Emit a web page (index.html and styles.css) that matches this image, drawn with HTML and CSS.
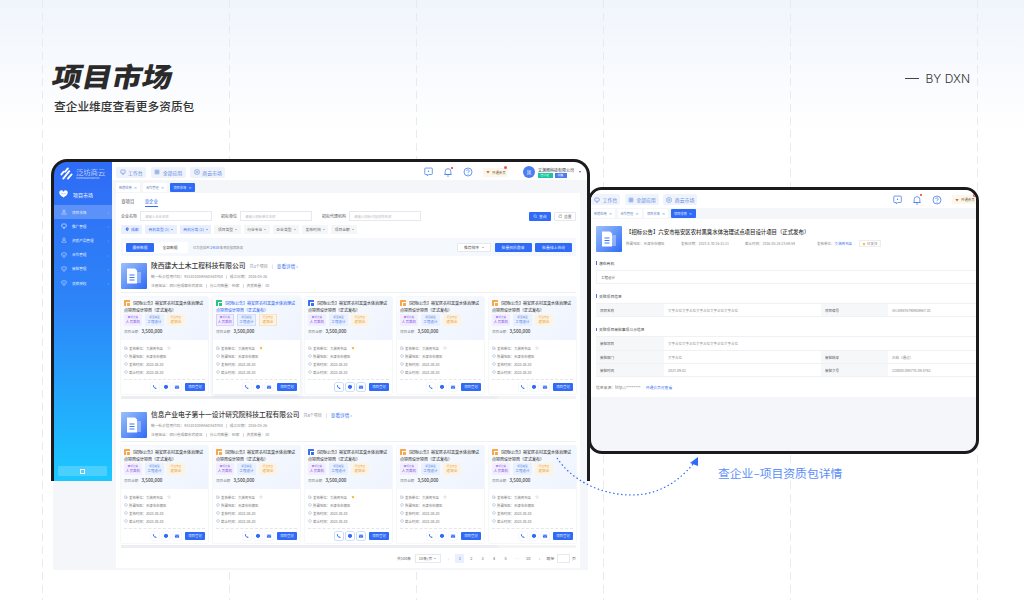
FILE: index.html
```html
<!DOCTYPE html>
<html lang="zh-CN">
<head>
<meta charset="utf-8">
<title>项目市场</title>
<link rel="stylesheet" href="styles.css">
</head>
<body>
<svg class="sprite" width="0" height="0" aria-hidden="true">
  <symbol id="i-monitor" viewBox="0 0 12 12"><rect x="1.5" y="2" width="9" height="6.5" rx="2" fill="none" stroke="currentColor" stroke-width="1.2"/><path d="M4 10.5h4" stroke="currentColor" stroke-width="1.2"/></symbol>
  <symbol id="i-apps" viewBox="0 0 12 12"><path d="M2 2h3.5v3.5H2zM6.500 2H10v3.5H6.500zM2 6.500h3.500V10H2zM6.500 6.500H10V10H6.500z" fill="none" stroke="currentColor" stroke-width="1"/></symbol>
  <symbol id="i-market" viewBox="0 0 12 12"><rect x="1.5" y="1.5" width="9" height="9" rx="2.5" fill="none" stroke="currentColor" stroke-width="1.1"/><circle cx="6" cy="6" r="1.6" fill="none" stroke="currentColor" stroke-width="1"/></symbol>
  <symbol id="i-chat" viewBox="0 0 14 14"><path d="M2.500 2.500a1 1 0 0 1 1-1H12a1 1 0 0 1 1 1v7a1 1 0 0 1-1 1H8l-2 2v-2H3.500a1 1 0 0 1-1-1z" fill="none" stroke="currentColor" stroke-width="1.1" stroke-linejoin="round"/><circle cx="7.700" cy="6" r="1" fill="currentColor"/></symbol>
  <symbol id="i-bell" viewBox="0 0 14 14"><path d="M3 10.500V6.300a4 4 0 0 1 8 0v4.200zM1.800 10.500h10.400M5.600 12.600h2.800" fill="none" stroke="currentColor" stroke-width="1.1" stroke-linejoin="round"/></symbol>
  <symbol id="i-help" viewBox="0 0 14 14"><circle cx="7" cy="7" r="5.600" fill="none" stroke="currentColor" stroke-width="1.1"/><path d="M5.300 5.600a1.700 1.700 0 1 1 2.600 1.400c-.6.400-.9.700-.9 1.400" fill="none" stroke="currentColor" stroke-width="1.1"/><circle cx="7" cy="10.200" r=".7" fill="currentColor"/></symbol>
  <symbol id="i-vip" viewBox="0 0 10 10"><path d="M1 2.500h8L5 8.500z" fill="#a96a1c"/><path d="M3.500 3.500L5 5.500l1.500-2" fill="none" stroke="#ffe3a8" stroke-width=".8"/></symbol>
  <symbol id="i-user" viewBox="0 0 12 12"><circle cx="6" cy="3.800" r="2.200" fill="none" stroke="currentColor" stroke-width=".9"/><path d="M1.600 10.500c.4-2.600 2.200-3.800 4.400-3.800s4 1.200 4.400 3.800z" fill="none" stroke="currentColor" stroke-width=".9"/></symbol>
  <symbol id="i-shield" viewBox="0 0 12 12"><path d="M6 1.200l4.600 1.600c.2 3.800-1.200 6.400-4.600 8-3.400-1.600-4.800-4.200-4.600-8z" fill="none" stroke="currentColor" stroke-width="1"/><path d="M3.800 5.400L6 7.400l2.200-2" fill="none" stroke="currentColor" stroke-width=".9"/></symbol>
  <symbol id="i-heart" viewBox="0 0 14 12"><path d="M7 11.500C3 8.600.5 6.600.5 3.900A3.300 3.300 0 0 1 7 2.800a3.300 3.300 0 0 1 6.500 1.100c0 2.700-2.500 4.700-6.500 7.600z" fill="currentColor"/><path d="M3.500 5h2.300l1.200 1.300L8.200 5h2.300" fill="none" stroke="#5b8ff8" stroke-width=".7"/></symbol>
  <symbol id="i-doc" viewBox="0 0 26 26"><rect x="15.500" y="9" width="4.500" height="11" fill="#fff" opacity=".35"/><path d="M6 5.500h8l2 2v13H6z" fill="#fff"/><path d="M8.500 12h5M8.500 14.500h5M8.500 17h5" stroke="#3a78f5" stroke-width="1"/></symbol>
  <symbol id="i-phone" viewBox="0 0 8 8"><path d="M2 1.200l1 1.300-.5.700c.3.800.9 1.400 1.700 1.800l.8-.5 1.200 1.100-.9 1C3.200 6.300 1.500 4.400 1.100 2z" fill="currentColor"/></symbol>
  <symbol id="i-bubble" viewBox="0 0 8 8"><path d="M1.300 2.300L4 1l2.700 1.300v2.600L4 7 1.300 4.900z" fill="currentColor"/></symbol>
  <symbol id="i-mail" viewBox="0 0 8 8"><path d="M1.200 2.200h5.600v4H1.200z" fill="currentColor"/><path d="M1.400 3l2.600 1.500L6.600 3" fill="none" stroke="#fff" stroke-width=".5"/></symbol>
  <symbol id="i-home" viewBox="0 0 6 6"><path d="M1 5.200V1.300h2.400v3.900zM3.400 3H5v2.200" fill="none" stroke="currentColor" stroke-width=".6"/></symbol>
  <symbol id="i-ring" viewBox="0 0 6 6"><circle cx="3" cy="3" r="2.100" fill="none" stroke="currentColor" stroke-width=".6"/></symbol>
  <symbol id="i-star" viewBox="0 0 6 6"><path d="M3 .7l.7 1.500 1.600.2-1.200 1.100.3 1.600L3 4.300l-1.400.8.3-1.600L.7 2.400l1.600-.2z"/></symbol>
  <symbol id="i-search" viewBox="0 0 6 6"><circle cx="2.700" cy="2.700" r="1.800" fill="none" stroke="currentColor" stroke-width=".6"/><path d="M4 4l1.300 1.300" stroke="currentColor" stroke-width=".6"/></symbol>
  <symbol id="i-reset" viewBox="0 0 6 6"><path d="M5 3a2 2 0 1 1-.7-1.500M4.600.8v1.200H3.400" fill="none" stroke="currentColor" stroke-width=".5"/></symbol>
  <symbol id="i-pin" viewBox="0 0 6 6"><path d="M3 .6a2 2 0 0 1 2 2C5 4 3 5.500 3 5.500S1 4 1 2.600a2 2 0 0 1 2-2z" fill="currentColor"/><circle cx="3" cy="2.600" r=".7" fill="#e9effc"/></symbol>
</svg>

<main class="canvas">
  <div class="guides"><i></i><i></i><i></i><i></i><i></i><i></i></div>

  <header class="hero">
    <div class="hero-copy">
      <h1 class="hero-title">项目市场</h1>
      <p class="hero-sub">查企业维度查看更多资质包</p>
    </div>
    <div class="hero-by"><span class="hero-dash"></span>BY DXN</div>
  </header>

  <section class="win-a">
    <aside class="side">
      <div class="brand">
        <svg class="brand-mark" viewBox="0 0 14 13"><path d="M1.500 7.500L4 4.500M5.500 4.500L8.500 1M3.500 12L10 4M8.500 12L12.500 7.500" fill="none" stroke="#fff" stroke-width="2" stroke-linecap="round"/></svg>
        <div class="brand-text"><b>泛坊商云</b><small>FANFANGSHANGYUN</small></div>
      </div>
      <div class="side-head"><svg class="side-heart"><use href="#i-heart"/></svg>项目市场</div>
      <nav class="side-menu">
        <a class="side-item is-on"><svg><use href="#i-user"/></svg>项目市场<em>›</em></a>
        <a class="side-item"><svg><use href="#i-monitor"/></svg>推广管理<em>›</em></a>
        <a class="side-item"><svg><use href="#i-user"/></svg>资质产品管理<em>›</em></a>
        <a class="side-item"><svg><use href="#i-shield"/></svg>合作管理<em>›</em></a>
        <a class="side-item"><svg><use href="#i-shield"/></svg>审批管理<em>›</em></a>
        <a class="side-item"><svg><use href="#i-shield"/></svg>关联授权<em>›</em></a>
      </nav>
      <div class="side-fold"><span></span></div>
    </aside>

    <div class="main">
      <div class="topnav">
        <a class="pill"><svg><use href="#i-monitor"/></svg>工作台</a>
        <a class="pill"><svg><use href="#i-apps"/></svg>全部应用</a>
        <a class="pill"><svg><use href="#i-market"/></svg>商云市场</a>
        <div class="nav-right">
          <svg class="nav-ic"><use href="#i-chat"/></svg>
          <span class="nav-bell"><svg class="nav-ic"><use href="#i-bell"/></svg></span>
          <svg class="nav-ic"><use href="#i-help"/></svg>
          <span class="vip"><svg><use href="#i-vip"/></svg>开通会员</span>
          <span class="avatar">凤</span>
          <div class="account">
            <b>文渊阁科技有限公司</b>
            <div class="account-tags"><span class="tag-green">已认证</span><span class="tag-blue">创建人</span></div>
          </div>
          <span class="account-caret"></span>
        </div>
      </div>
      <div class="tabs">
        <a class="tab">新增应用<i>×</i></a>
        <a class="tab">合作管理<i>×</i></a>
        <a class="tab is-on">项目市场<i>×</i></a>
      </div>

      <div class="panel">
        <div class="seg">
          <a>查项目</a><a class="is-on">查企业</a>
        </div>
        <div class="search">
          <label>企业名称</label><span class="field">请输入企业名称</span>
          <label>招标单位</label><span class="field">请输入招标单位名称</span>
          <label>招标代理机构</label><span class="field">请输入招标代理机构名称</span>
          <a class="btn btn-primary btn-query"><svg><use href="#i-search"/></svg>查询</a><a class="btn btn-plain"><svg><use href="#i-reset"/></svg>重置</a>
        </div>
        <div class="filters">
          <a class="chip chip-on chip-city"><svg><use href="#i-pin"/></svg>成都</a>
          <a class="chip chip-on">商机类型 (1) <i></i></a>
          <a class="chip chip-on">商机分类 (2) <i></i></a>
          <a class="chip">项目类型 <i></i></a>
          <a class="chip">行业专业 <i></i></a>
          <a class="chip">企业类型 <i></i></a>
          <a class="chip">发布时间 <i></i></a>
          <a class="chip">项目金额 <i></i></a>
        </div>
        <div class="toolbar">
          <div class="switch"><a class="is-on">最新数据</a><a>全部数据</a></div>
          <p class="found">已为您找到 <b>2938</b> 条相关搜索结果</p>
          <a class="btn btn-plain sort">推荐排序 <i></i></a>
          <a class="btn btn-primary batch">批量招投邀请</a>
          <a class="btn btn-primary batch">批量线上咨询</a>
        </div>

        <article class="company">
          <div class="co-head">
            <svg class="co-logo"><use href="#i-doc"/></svg>
            <div class="co-info">
              <h2>陕西建大土木工程科技有限公司<span>共<b>3</b>个项目</span><span class="co-sep">|</span><a>查看详情 ›</a></h2>
              <p><span>统一社会信用代码：91510105MA6DE63Y04</span><span>成立日期：2016-05-26</span></p>
              <p><span>注册地址：四川省成都市武侯区</span><span>分公司数量：95家</span><span>资质数量：10</span></p>
            </div>
          </div>
          <div class="cards">
            <div class="card">
              <div class="card-top"><h3><i class="mark mark-o"></i>【招标公告】裕安区农村黑臭水体治理试点项目设计项目（正式发布）</h3><div class="tags"><span class="t-p"><small>商机分类</small>人员裁机</span><span class="t-b"><small>项目类型</small>工程设计</span><span class="t-o"><small>行业专业</small>建筑业</span></div><p class="amount">项目金额<b>3,500,000</b></p></div>
              <ul class="rows"><li><svg><use href="#i-home"/></svg>发布单位：文渊阁书店<svg class="star"><use href="#i-star"/></svg></li><li><svg><use href="#i-ring"/></svg>所属地区：天津市市辖区</li><li><svg><use href="#i-ring"/></svg>发布时间：2023-08-30</li><li><svg><use href="#i-ring"/></svg>截止时间：2023-08-30</li></ul>
              <div class="acts"><a><svg><use href="#i-phone"/></svg></a><a><svg><use href="#i-bubble"/></svg></a><a><svg><use href="#i-mail"/></svg></a><b>项目登记</b></div>
            </div>
            <div class="card card-hover">
              <div class="card-top"><h3><i class="mark mark-g"></i>【招标公告】裕安区农村黑臭水体治理试点项目设计项目（正式发布）</h3><div class="tags"><span class="t-p"><small>商机分类</small>人员裁机</span><span class="t-b"><small>项目类型</small>工程设计</span><span class="t-o"><small>行业专业</small>建筑业</span></div><p class="amount">项目金额<b>3,500,000</b></p></div>
              <ul class="rows"><li><svg><use href="#i-home"/></svg>发布单位：文渊阁书店<svg class="star star-on"><use href="#i-star"/></svg></li><li><svg><use href="#i-ring"/></svg>所属地区：天津市市辖区</li><li><svg><use href="#i-ring"/></svg>发布时间：2023-08-30</li><li><svg><use href="#i-ring"/></svg>截止时间：2023-08-30</li></ul>
              <div class="acts"><a><svg><use href="#i-phone"/></svg></a><a><svg><use href="#i-bubble"/></svg></a><a><svg><use href="#i-mail"/></svg></a><b>项目登记</b></div>
            </div>
            <div class="card card-acts">
              <div class="card-top"><h3><i class="mark mark-b"></i>【招标公告】裕安区农村黑臭水体治理试点项目设计项目（正式发布）</h3><div class="tags"><span class="t-p"><small>商机分类</small>人员裁机</span><span class="t-b"><small>项目类型</small>工程设计</span><span class="t-o"><small>行业专业</small>建筑业</span></div><p class="amount">项目金额<b>3,500,000</b></p></div>
              <ul class="rows"><li><svg><use href="#i-home"/></svg>发布单位：文渊阁书店<svg class="star star-on"><use href="#i-star"/></svg></li><li><svg><use href="#i-ring"/></svg>所属地区：天津市市辖区</li><li><svg><use href="#i-ring"/></svg>发布时间：2023-08-30</li><li><svg><use href="#i-ring"/></svg>截止时间：2023-08-30</li></ul>
              <div class="acts"><a><svg><use href="#i-phone"/></svg></a><a><svg><use href="#i-bubble"/></svg></a><a><svg><use href="#i-mail"/></svg></a><b>项目登记</b></div>
            </div>
            <div class="card">
              <div class="card-top"><h3><i class="mark mark-o"></i>【招标公告】裕安区农村黑臭水体治理试点项目设计项目（正式发布）</h3><div class="tags"><span class="t-p"><small>商机分类</small>人员裁机</span><span class="t-b"><small>项目类型</small>工程设计</span><span class="t-o"><small>行业专业</small>建筑业</span></div><p class="amount">项目金额<b>3,500,000</b></p></div>
              <ul class="rows"><li><svg><use href="#i-home"/></svg>发布单位：文渊阁书店<svg class="star"><use href="#i-star"/></svg></li><li><svg><use href="#i-ring"/></svg>所属地区：天津市市辖区</li><li><svg><use href="#i-ring"/></svg>发布时间：2023-08-30</li><li><svg><use href="#i-ring"/></svg>截止时间：2023-08-30</li></ul>
              <div class="acts"><a><svg><use href="#i-phone"/></svg></a><a><svg><use href="#i-bubble"/></svg></a><a><svg><use href="#i-mail"/></svg></a><b>项目登记</b></div>
            </div>
            <div class="card">
              <div class="card-top"><h3><i class="mark mark-o"></i>【招标公告】裕安区农村黑臭水体治理试点项目设计项目（正式发布）</h3><div class="tags"><span class="t-p"><small>商机分类</small>人员裁机</span><span class="t-b"><small>项目类型</small>工程设计</span><span class="t-o"><small>行业专业</small>建筑业</span></div><p class="amount">项目金额<b>3,500,000</b></p></div>
              <ul class="rows"><li><svg><use href="#i-home"/></svg>发布单位：文渊阁书店<svg class="star"><use href="#i-star"/></svg></li><li><svg><use href="#i-ring"/></svg>所属地区：天津市市辖区</li><li><svg><use href="#i-ring"/></svg>发布时间：2023-08-30</li><li><svg><use href="#i-ring"/></svg>截止时间：2023-08-30</li></ul>
              <div class="acts"><a><svg><use href="#i-phone"/></svg></a><a><svg><use href="#i-bubble"/></svg></a><a><svg><use href="#i-mail"/></svg></a><b>项目登记</b></div>
            </div>
          </div>
          <div class="hscroll"><span></span></div>
        </article>

        <article class="company">
          <div class="co-head">
            <svg class="co-logo"><use href="#i-doc"/></svg>
            <div class="co-info">
              <h2>信息产业电子第十一设计研究院科技工程有限公司<span>共<b>8</b>个项目</span><span class="co-sep">|</span><a>查看详情 ›</a></h2>
              <p><span>统一社会信用代码：91510105MA6DE63Y04</span><span>成立日期：2016-05-26</span></p>
              <p><span>注册地址：四川省成都市武侯区</span><span>分公司数量：95家</span><span>资质数量：10</span></p>
            </div>
          </div>
          <div class="cards">
            <div class="card">
              <div class="card-top"><h3><i class="mark mark-o"></i>【招标公告】裕安区农村黑臭水体治理试点项目设计项目（正式发布）</h3><div class="tags"><span class="t-p"><small>商机分类</small>人员裁机</span><span class="t-b"><small>项目类型</small>工程设计</span><span class="t-o"><small>行业专业</small>建筑业</span></div><p class="amount">项目金额<b>3,500,000</b></p></div>
              <ul class="rows"><li><svg><use href="#i-home"/></svg>发布单位：文渊阁书店<svg class="star"><use href="#i-star"/></svg></li><li><svg><use href="#i-ring"/></svg>所属地区：天津市市辖区</li><li><svg><use href="#i-ring"/></svg>发布时间：2023-08-30</li><li><svg><use href="#i-ring"/></svg>截止时间：2023-08-30</li></ul>
              <div class="acts"><a><svg><use href="#i-phone"/></svg></a><a><svg><use href="#i-bubble"/></svg></a><a><svg><use href="#i-mail"/></svg></a><b>项目登记</b></div>
            </div>
            <div class="card">
              <div class="card-top"><h3><i class="mark mark-o"></i>【招标公告】裕安区农村黑臭水体治理试点项目设计项目（正式发布）</h3><div class="tags"><span class="t-p"><small>商机分类</small>人员裁机</span><span class="t-b"><small>项目类型</small>工程设计</span><span class="t-o"><small>行业专业</small>建筑业</span></div><p class="amount">项目金额<b>3,500,000</b></p></div>
              <ul class="rows"><li><svg><use href="#i-home"/></svg>发布单位：文渊阁书店<svg class="star"><use href="#i-star"/></svg></li><li><svg><use href="#i-ring"/></svg>所属地区：天津市市辖区</li><li><svg><use href="#i-ring"/></svg>发布时间：2023-08-30</li><li><svg><use href="#i-ring"/></svg>截止时间：2023-08-30</li></ul>
              <div class="acts"><a><svg><use href="#i-phone"/></svg></a><a><svg><use href="#i-bubble"/></svg></a><a><svg><use href="#i-mail"/></svg></a><b>项目登记</b></div>
            </div>
            <div class="card card-acts">
              <div class="card-top"><h3><i class="mark mark-b"></i>【招标公告】裕安区农村黑臭水体治理试点项目设计项目（正式发布）</h3><div class="tags"><span class="t-p"><small>商机分类</small>人员裁机</span><span class="t-b"><small>项目类型</small>工程设计</span><span class="t-o"><small>行业专业</small>建筑业</span></div><p class="amount">项目金额<b>3,500,000</b></p></div>
              <ul class="rows"><li><svg><use href="#i-home"/></svg>发布单位：文渊阁书店<svg class="star star-on"><use href="#i-star"/></svg></li><li><svg><use href="#i-ring"/></svg>所属地区：天津市市辖区</li><li><svg><use href="#i-ring"/></svg>发布时间：2023-08-30</li><li><svg><use href="#i-ring"/></svg>截止时间：2023-08-30</li></ul>
              <div class="acts"><a><svg><use href="#i-phone"/></svg></a><a><svg><use href="#i-bubble"/></svg></a><a><svg><use href="#i-mail"/></svg></a><b>项目登记</b></div>
            </div>
            <div class="card">
              <div class="card-top"><h3><i class="mark mark-o"></i>【招标公告】裕安区农村黑臭水体治理试点项目设计项目（正式发布）</h3><div class="tags"><span class="t-p"><small>商机分类</small>人员裁机</span><span class="t-b"><small>项目类型</small>工程设计</span><span class="t-o"><small>行业专业</small>建筑业</span></div><p class="amount">项目金额<b>3,500,000</b></p></div>
              <ul class="rows"><li><svg><use href="#i-home"/></svg>发布单位：文渊阁书店<svg class="star"><use href="#i-star"/></svg></li><li><svg><use href="#i-ring"/></svg>所属地区：天津市市辖区</li><li><svg><use href="#i-ring"/></svg>发布时间：2023-08-30</li><li><svg><use href="#i-ring"/></svg>截止时间：2023-08-30</li></ul>
              <div class="acts"><a><svg><use href="#i-phone"/></svg></a><a><svg><use href="#i-bubble"/></svg></a><a><svg><use href="#i-mail"/></svg></a><b>项目登记</b></div>
            </div>
            <div class="card">
              <div class="card-top"><h3><i class="mark mark-o"></i>【招标公告】裕安区农村黑臭水体治理试点项目设计项目（正式发布）</h3><div class="tags"><span class="t-p"><small>商机分类</small>人员裁机</span><span class="t-b"><small>项目类型</small>工程设计</span><span class="t-o"><small>行业专业</small>建筑业</span></div><p class="amount">项目金额<b>3,500,000</b></p></div>
              <ul class="rows"><li><svg><use href="#i-home"/></svg>发布单位：文渊阁书店<svg class="star"><use href="#i-star"/></svg></li><li><svg><use href="#i-ring"/></svg>所属地区：天津市市辖区</li><li><svg><use href="#i-ring"/></svg>发布时间：2023-08-30</li><li><svg><use href="#i-ring"/></svg>截止时间：2023-08-30</li></ul>
              <div class="acts"><a><svg><use href="#i-phone"/></svg></a><a><svg><use href="#i-bubble"/></svg></a><a><svg><use href="#i-mail"/></svg></a><b>项目登记</b></div>
            </div>
          </div>
          <div class="hscroll"><span></span></div>
        </article>

        <div class="pager">
          <span>共100条</span><span class="pg-size">10条/页 <i></i></span><span class="pg-n pg-mute">‹</span><span class="pg-n pg-on">1</span><span class="pg-n">2</span><span class="pg-n">3</span><span class="pg-n">4</span><span class="pg-n">5</span><span class="pg-n pg-mute">…</span><span class="pg-n">10</span><span class="pg-n">›</span><span>跳至</span><span class="pg-jump"></span><span>页</span>
        </div>
      </div>
    </div>
  </section>
  <div class="frame-a"></div>

  <section class="win-b">
    <div class="topnav topnav-b">
      <a class="pill"><svg><use href="#i-monitor"/></svg>工作台</a>
      <a class="pill"><svg><use href="#i-apps"/></svg>全部应用</a>
      <a class="pill"><svg><use href="#i-market"/></svg>商云市场</a>
      <div class="nav-right">
        <svg class="nav-ic"><use href="#i-chat"/></svg>
        <span class="nav-bell"><svg class="nav-ic"><use href="#i-bell"/></svg></span>
        <svg class="nav-ic"><use href="#i-help"/></svg>
        <span class="vip"><svg><use href="#i-vip"/></svg>开通会员</span>
      </div>
    </div>
    <div class="tabs tabs-b">
      <a class="tab">新增应用<i>×</i></a>
      <a class="tab">合作管理<i>×</i></a>
      <a class="tab">项目市场<i>×</i></a>
      <a class="tab is-on">项目详情<i>×</i></a>
    </div>
    <div class="detail">
      <div class="d-head">
        <svg class="co-logo"><use href="#i-doc"/></svg>
        <div class="d-info">
          <h2>【招标公告】六安市裕安区农村黑臭水体治理试点项目设计项目（正式发布）</h2>
          <p><span class="m1">所属地区：天津市市辖区</span><span class="m2">发布日期：2023-8-30 16:11:11</span><span class="m3">截止时间：2016-05-26 23:59:59</span><span class="m4">发布单位：<a>文渊阁书店</a></span><em><svg class="star star-on"><use href="#i-star"/></svg>已关注</em></p>
        </div>
      </div>
      <h3 class="d-sec">潜在商机</h3>
      <div class="d-box">工程设计</div>
      <h3 class="d-sec">关联项目信息</h3>
      <div class="d-table">
        <b>项目名称</b><span>文字占位文字占位文字占位文字占位文字占位</span><b>项目编号</b><span>SHJ09876790908967-01</span>
      </div>
      <h3 class="d-sec">关联项目审批事项公示信息</h3>
      <div class="d-table">
        <b>审批项目</b><span class="d-wide">文字占位文字占位文字占位文字占位文字占位</span>
        <b>审批部门</b><span>文字占位</span><b>审批结果</b><span>办结（通过）</span>
        <b>审批时间</b><span>2023-09-02</span><b>审批文号</b><span>220008-098778-09-8762</span>
      </div>
      <p class="d-source">信息来源：http://********<a>开通会员可查看</a></p>
    </div>
  </section>

  <p class="caption">查企业–项目资质包详情</p>
  <svg class="arrow" viewBox="0 0 1024 600" aria-hidden="true">
    <path d="M557 458C570 478 598 495 632 495C660 495 680 480 694 463" fill="none" stroke="#2f6bf6" stroke-width="1.2" stroke-dasharray="1.500 2.500"/>
    <path d="M698 457L690 463L698 466z" fill="#2f6bf6"/>
  </svg>
</main>
</body>
</html>
```

FILE: styles.css
```css
* { box-sizing: border-box; margin: 0; padding: 0; }
html, body { width: 1024px; height: 600px; overflow: hidden; }
body { font-family: "Noto Sans CJK SC", "Noto Sans", "Liberation Sans", sans-serif; background: #fff; color: #333; }
a { color: inherit; text-decoration: none; }
ul { list-style: none; }
i, em { font-style: normal; }
.sprite { position: absolute; }

.canvas { position: relative; width: 1024px; height: 600px; overflow: hidden; background: linear-gradient(180deg, #f0f5fc 0, #f8fafe 70px, #fff 130px); }
.guides { position: absolute; inset: 0; display: flex; gap: 186px; padding-left: 42px; }
.guides i { width: 1px; height: 600px; background: repeating-linear-gradient(180deg, #e8eaee 0 8px, transparent 8px 13px); }

.hero { position: relative; display: flex; justify-content: space-between; padding: 54px 54px 0 53px; }
.hero-title { font-size: 30px; line-height: 42px; font-weight: 900; color: #2a2a2a; transform: skewX(-12deg) scaleY(.9); transform-origin: 0 50%; }
.hero-sub { margin-top: 1px; font-size: 11.7px; line-height: 18px; font-weight: 500; color: #333; padding-left: 1px; }
.hero-by { display: flex; align-items: center; height: 16px; margin-top: 16px; font-family: "Inter", "Liberation Sans", sans-serif; font-size: 12px; font-weight: 300; color: #333; }
.hero-dash { width: 14px; height: 1px; background: #444; margin-right: 6px; }

/* window A */
.win-a { position: absolute; left: 53px; top: 161px; width: 535px; height: 409px; display: grid; grid-template-columns: 59px 1fr; align-items: start; background: #f4f6fa; border-radius: 13px 13px 0 0; overflow: hidden; }
.frame-a { position: absolute; left: 51px; top: 159px; width: 539px; height: 322px; border: 3px solid #1b1b1d; border-bottom: 0; border-radius: 16px 16px 0 0; }
.side { height: 320px; display: flex; flex-direction: column; color: #fff; background: linear-gradient(180deg, #2f6bf6 0, #2d84f8 45%, #1cc8ff 100%); }
.brand { display: flex; align-items: center; gap: 3px; height: 22px; padding: 3px 0 0 7px; }
.brand-mark { width: 13px; height: 13px; flex: none; }
.brand-text b { display: block; font-size: 7.3px; line-height: 9px; font-weight: 300; }
.brand-text small { display: block; font-size: 2.4px; line-height: 3px; opacity: .8; }
.side-head { display: flex; align-items: center; gap: 5px; height: 22px; padding-left: 6px; font-size: 5px; }
.side-heart { width: 9px; height: 8px; color: #fff; }
.side-item { display: flex; align-items: center; gap: 5px; height: 14.2px; padding: 0 3px 0 8px; font-size: 3.6px; color: #eaf1ff; }
.side-item svg { width: 6px; height: 6px; flex: none; }
.side-item em { margin-left: auto; font-size: 4px; opacity: .6; }
.side-item.is-on { background: rgba(255,255,255,.22); }
.side-fold { margin: auto 5px 5px; height: 10px; border-radius: 1px; background: rgba(255,255,255,.2); display: flex; align-items: center; justify-content: center; }
.side-fold span { width: 5px; height: 5px; border: .6px solid #fff; }

.main { min-width: 0; }
.topnav { display: flex; align-items: center; gap: 4.500px; height: 19px; padding: 5px 0 2px 4px; background: #fff; }
.pill { display: flex; align-items: center; gap: 2.500px; height: 11px; padding: 0 3.500px; border-radius: 2px; background: #eff3fc; color: #5d89dd; font-size: 4.900px; white-space: nowrap; }
.pill svg { width: 6px; height: 6px; flex: none; }
.nav-right { margin-left: auto; display: flex; align-items: center; }
.nav-ic { display: block; width: 10px; height: 10px; color: #4a7ff0; margin-right: 10px; }
.nav-bell { position: relative; display: block; }
.nav-bell::after { content: ""; position: absolute; left: 7.500px; top: -.5px; width: 2px; height: 2px; border-radius: 50%; background: #f03030; }
.vip { position: relative; display: flex; align-items: center; gap: 2px; width: 24px; height: 9px; padding-left: 3px; background: #fdf6ea; font-size: 3.400px; color: #70542a; white-space: nowrap; }
.vip svg { width: 4px; height: 4px; flex: none; }
.vip::after { content: ""; position: absolute; right: 0; top: -2px; width: 3.500px; height: 3.500px; border-radius: 50%; background: #f25757; }
.avatar { width: 12px; height: 12px; margin-left: 16px; border-radius: 50%; background: #4b7df0; color: #fff; font-size: 4.500px; line-height: 12px; text-align: center; }
.account { margin-left: 3px; width: 37px; }
.account b { display: block; font-size: 4px; line-height: 6px; font-weight: 400; color: #333; white-space: nowrap; }
.account-tags { display: flex; gap: 2px; }
.account-tags span { height: 5px; font-size: 2.800px; line-height: 5px; color: #fff; padding: 0 2.500px; }
.tag-green { background: #19c8a0; width: 15px; }
.tag-blue { background: #4b7df0; width: 12px; }
.account-caret { width: 0; height: 0; margin: 0 7px 0 4px; border: 1.500px solid transparent; border-top: 2px solid #3a6ff0; border-bottom: 0; }

.tabs { display: flex; align-items: center; gap: 3px; height: 13px; padding: 1px 0 0 4px; }
.tab { display: flex; align-items: center; justify-content: center; gap: 2px; width: 24px; height: 9px; background: #fff; border-radius: 1px; font-size: 3.200px; color: #5d7fc4; white-space: nowrap; }
.tab i { font-size: 3.500px; }
.tab.is-on { background: #2f6bf6; color: #e6eeff; width: 25px; }

.panel { margin-left: 4px; width: 464px; height: 375px; padding: 0 4px 0 5px; background: #fff; }
.seg { display: flex; gap: 10px; height: 14px; align-items: flex-end; font-size: 4.400px; color: #555; }
.seg a { height: 10px; line-height: 8px; width: 13.500px; text-align: center; }
.seg .is-on { color: #2f6bf6; border-bottom: .8px solid #2f6bf6; }
.search { display: flex; align-items: center; height: 10px; margin-top: 4px; font-size: 4px; color: #555; }
.search label { white-space: nowrap; margin-right: 3px; }
.field { display: block; width: 72px; height: 10px; margin-right: 9px; padding-left: 4px; border: .5px solid #e6e8ed; line-height: 9px; color: #bbb; font-size: 3.400px; white-space: nowrap; }
.search .field:nth-of-type(2) { margin-right: 10px; }
.search .field:nth-of-type(3) { margin-right: 0; }
.btn { display: flex; align-items: center; justify-content: center; height: 9px; gap: 1px; border-radius: 1px; font-size: 3.800px; white-space: nowrap; }
.btn svg { width: 4.500px; height: 4.500px; }
.btn-primary { background: #2f6bf6; color: #e8efff; }
.btn-plain { background: #fff; color: #555; border: .5px solid #e6e8ed; }
.btn-query { width: 22px; margin-left: 108px; margin-right: 3px; }
.search .btn-plain { width: 22px; }
.filters { display: flex; gap: 3px; height: 9px; margin-top: 4px; }
.chip { display: flex; align-items: center; justify-content: center; gap: 2px; height: 9px; padding: 0 3.500px; background: #f5f6f8; border-radius: 1px; font-size: 3.800px; color: #666; white-space: nowrap; }
.chip-city { width: 21px; }
.chip-city svg { width: 4.500px; height: 4.500px; }
.chip i, .sort i, .pg-size i { width: 0; height: 0; border: 1px solid transparent; border-top: 1.500px solid #888; border-bottom: 0; }
.chip-on { background: #e9effc; color: #3a6ff0; }
.chip-on i { border-top-color: #3a6ff0; }
.toolbar { display: flex; align-items: center; height: 18px; margin-top: 4px; padding: 0 4px 0 2px; background: #f5f8fd; }
.switch { display: flex; align-items: center; width: 65px; height: 11px; padding-left: 3px; background: #fff; font-size: 3.800px; color: #444; }
.switch a { width: 32px; text-align: center; line-height: 9px; height: 9px; }
.switch .is-on { width: 28px; background: #2f6bf6; color: #e8efff; border-radius: 1px; }
.found { margin-left: 5px; font-size: 3.300px; color: #888; white-space: nowrap; }
.found b { color: #3a6ff0; font-weight: 400; font-size: 4px; }
.sort { margin-left: auto; width: 34px; gap: 3px; font-size: 3.800px; }
.batch { width: 37px; margin-left: 3.500px; }

.company { margin-top: 7px; }
.co-head { display: flex; gap: 4px; height: 30px; padding-bottom: 5px; border-bottom: .5px solid #eef0f4; }
.co-logo { display: block; flex: none; width: 26px; height: 26px; background: linear-gradient(135deg, #9cc0fb, #2f6bf6); border-radius: 1px; }
.co-info h2 { display: flex; align-items: baseline; font-size: 6.750px; line-height: 9px; font-weight: 500; color: #3a3a3a; white-space: nowrap; margin-top: -2px; margin-bottom: 1px; }
.co-info h2 span { font-size: 4px; font-weight: 400; color: #888; margin-left: 4px; }
.co-info h2 span b { color: #3a6ff0; font-weight: 400; }
.co-info h2 a { font-size: 4.600px; font-weight: 400; color: #3a6ff0; margin-left: 4px; }
.co-info p { display: flex; font-size: 3.700px; line-height: 9px; color: #888; white-space: nowrap; }
.co-info p span + span { position: relative; margin-left: 7px; }
.co-info p span + span::before { content: ""; position: absolute; left: -4px; top: 3px; width: .5px; height: 3.500px; background: #d8dbe0; }
.cards { display: flex; gap: 5px; margin-top: 4px; }
.card { width: 87px; height: 97px; display: flex; flex-direction: column; background: #fff; box-shadow: 0 0 0 .5px #eef0f4; border-radius: 1px; }
.card-top { height: 43px; padding: 3px 3px 0; background: linear-gradient(135deg, #fafcff 0, #eef3fe 100%); }
.card h3 { font-size: 4px; line-height: 6.700px; font-weight: 500; color: #444; }
.mark { position: relative; display: inline-block; width: 6px; height: 6px; margin-right: 1px; border-radius: .5px; vertical-align: top; }
.mark::after { content: ""; position: absolute; left: 1.500px; top: 1.500px; width: 3px; height: 3px; border: .6px solid #fff; }
.mark-o { background: #f7a84a; }
.mark-g { background: #2fc27f; }
.mark-b { background: #3a6ff0; }
.tags { display: flex; gap: 3px; margin-top: 1px; }
.tags span { display: block; height: 12px; padding: 1px 0 0; border-radius: 1px; font-size: 3.600px; line-height: 5px; text-align: center; white-space: nowrap; width: 18px; }
.tags span.t-b { width: 19px; }
.tags small { display: block; font-size: 2.600px; line-height: 4px; }
.t-p { background: #f2eefe; color: #8557e8; }
.t-b { background: #e9f0fe; color: #4f80ec; }
.t-o { background: #fdf3e2; color: #e8a13e; }
.amount { margin-top: 2px; display: flex; align-items: center; font-size: 3.600px; color: #888; }
.amount b { margin-left: 3px; font-size: 4.600px; font-weight: 500; color: #444; }
.rows { padding: 4px 3px 0; height: 39px; }
.rows li { display: flex; align-items: center; gap: 1px; height: 8px; font-size: 3.400px; color: #777; white-space: nowrap; }
.rows svg { width: 4px; height: 4px; color: #7f97c9; flex: none; }
.rows .star { margin-left: 3px; fill: none; stroke: #bbb; stroke-width: .5; }
.rows .star-on, .star-on { fill: #f7a21a; stroke: none; }
.acts { display: flex; align-items: center; gap: 3px; margin: 0 3px; padding-top: 3px; border-top: .5px dashed #e4e6ea; justify-content: flex-end; }
.acts a { display: flex; align-items: center; justify-content: center; width: 8px; height: 8px; background: #fff; box-shadow: 0 0 0 .5px #eef0f4; border-radius: 1px; color: #2f6bf6; }
.acts svg { width: 6px; height: 6px; }
.acts b { width: 20px; height: 8px; margin-left: 1px; background: #2f6bf6; color: #e6eeff; border-radius: 1px; font-size: 3.400px; line-height: 8px; font-weight: 400; text-align: center; }
.card-hover { box-shadow: 0 1px 5px rgba(60,90,160,.18); }
.card-hover h3 { color: #3a6ff0; }
.card-hover .t-p { box-shadow: inset 0 0 0 .6px #c9b8f5; }
.card-hover .t-b { box-shadow: inset 0 0 0 .6px #bcd0f8; }
.card-hover .t-o { box-shadow: inset 0 0 0 .6px #f6d8a6; }
.card-acts .acts a { box-shadow: 0 0 0 .6px #a5c0f7; }
.hscroll { margin-top: 2px; height: 3px; background: #f3f4f6; }
.hscroll span { display: block; width: 377px; height: 3px; background: #eceef1; }
.company + .company { margin-top: 13px; }
.pager { display: flex; align-items: center; justify-content: flex-end; gap: 2.400px; height: 12px; margin-top: 4px; padding-right: 0; font-size: 3.900px; color: #666; white-space: nowrap; }
.pg-size { display: flex; align-items: center; justify-content: center; gap: 2px; width: 26px; height: 9px; margin: 0 1px; border: .5px solid #e8e9ed; }
.pg-n { width: 9px; height: 9px; line-height: 9px; text-align: center; }
.pg-mute { color: #bbb; }
.pg-on { background: #e9effc; color: #3a6ff0; }
.pg-jump { width: 13px; height: 9px; border: .5px solid #e8e9ed; }

/* window B */
.win-b { position: absolute; left: 588px; top: 187px; width: 391px; height: 267px; background: #f4f6fa; border: 3px solid #1b1b1d; border-radius: 14px; overflow: hidden; }
.topnav-b { height: 18px; padding: 4px 0 3px 0; }
.topnav-b .pill { padding: 0 3px; }
.tabs-b { height: 11px; padding: 0; gap: 2.500px; background: #f4f6fa; }
.detail { height: 178px; padding: 0 0 0 5px; background: #fff; }
.d-head { display: flex; gap: 4px; height: 32px; padding-top: 7px; }
.d-info h2 { font-size: 5.400px; line-height: 8px; font-weight: 500; color: #333; margin-top: 2px; white-space: nowrap; }
.d-info p { display: flex; align-items: center; margin-top: 4px; font-size: 3.500px; color: #888; white-space: nowrap; }
.m1 { width: 55px; }
.m2 { width: 64px; }
.m3 { width: 72px; }
.m4 { width: 42px; }
.d-info a { color: #3a6ff0; }
.d-info em { display: flex; align-items: center; gap: 1px; height: 7px; padding: 0 2px; border: .5px solid #eee; color: #777; }
.d-info em svg { width: 4px; height: 4px; }
.d-sec { display: flex; align-items: center; height: 8px; margin-top: 8px; font-size: 3.800px; font-weight: 400; color: #444; }
.d-sec::before { content: ""; width: 1px; height: 3.500px; margin-right: 2px; background: #3a6ff0; }
.d-box { height: 14px; margin-top: 3px; padding-left: 4px; border: .5px solid #f0f1f4; border-right: 0; font-size: 3.500px; line-height: 13px; color: #555; }
.d-table { display: grid; grid-template-columns: 68px 157px 67px 1fr; margin-top: 3px; font-size: 3.500px; border-top: .5px solid #f0f1f4; }
.d-table b, .d-table span { height: 13.300px; line-height: 13px; padding-left: 4px; border-bottom: .5px solid #f0f1f4; font-weight: 400; white-space: nowrap; }
.d-table b { background: #f6f7f9; color: #555; }
.d-table span { color: #888; }
.d-wide { grid-column: 2 / 5; }
.d-source { margin-top: 8px; font-size: 3.800px; color: #777; }
.d-source a { margin-left: 5px; color: #3a6ff0; }

.caption { position: absolute; left: 718px; top: 464px; font-size: 11.800px; line-height: 18px; color: #5b8ef8; white-space: nowrap; }
.arrow { position: absolute; inset: 0; width: 1024px; height: 600px; pointer-events: none; }
```
